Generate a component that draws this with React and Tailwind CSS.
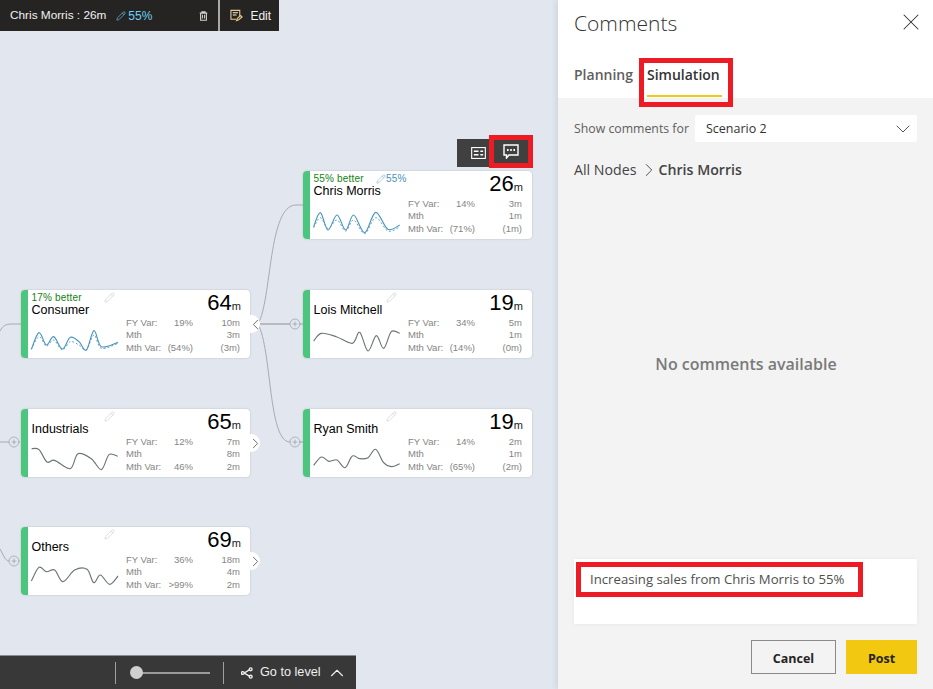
import React from 'react';
import { Pencil, X, ChevronDown, ChevronRight, ChevronLeft, ChevronUp, CirclePlus } from 'lucide-react';

// smooth line through points, coords are 3x card-local
const smoothPath = (pts) => {
  let d = `M${pts[0][0]} ${pts[0][1]}`;
  for (let i = 0; i < pts.length - 1; i++) {
    const p0 = pts[i - 1] || pts[i];
    const p1 = pts[i];
    const p2 = pts[i + 1];
    const p3 = pts[i + 2] || p2;
    const c1x = p1[0] + (p2[0] - p0[0]) / 6;
    const c1y = p1[1] + (p2[1] - p0[1]) / 6;
    const c2x = p2[0] - (p3[0] - p1[0]) / 6;
    const c2y = p2[1] - (p3[1] - p1[1]) / 6;
    d += ` C${c1x} ${c1y} ${c2x} ${c2y} ${p2[0]} ${p2[1]}`;
  }
  return d;
};

const nodes = [
  {
    name: 'Chris Morris', value: '26', left: 303, top: 171, better: '55% better', edited: '55%', blue: true,
    rows: [['FY Var:', '14%', '3m'], ['Mth', '', '1m'], ['Mth Var:', '(71%)', '(1m)']],
    line: [[32,167],[52,125],[75,177],[102,132],[128,177],[152,132],[185,185],[218,124],[255,175],[290,162]],
    dash: [[32,170],[52,140],[75,172],[102,147],[128,180],[152,147],[185,188],[218,140],[255,180],[290,168]],
  },
  {
    name: 'Consumer', value: '64', left: 21, top: 290, better: '17% better', handle: 'left', blue: true,
    rows: [['FY Var:', '19%', '10m'], ['Mth', '', '3m'], ['Mth Var:', '(54%)', '(3m)']],
    line: [[31,178],[54,128],[76,165],[98,140],[124,177],[148,142],[174,155],[196,180],[219,122],[241,170],[291,157]],
    dash: [[31,178],[54,140],[76,168],[98,150],[124,180],[148,155],[174,165],[196,180],[219,135],[241,175],[291,160]],
  },
  {
    name: 'Lois Mitchell', value: '19', left: 303, top: 290,
    rows: [['FY Var:', '34%', '5m'], ['Mth', '', '1m'], ['Mth Var:', '(14%)', '(0m)']],
    line: [[32,153],[55,130],[100,140],[148,160],[170,127],[195,183],[220,137],[242,175],[265,125],[290,130]],
  },
  {
    name: 'Industrials', value: '65', left: 21, top: 409, handle: 'right',
    rows: [['FY Var:', '12%', '7m'], ['Mth', '', '8m'], ['Mth Var:', '46%', '2m']],
    line: [[32,119],[54,122],[78,159],[101,154],[148,179],[171,134],[211,149],[241,182],[264,137],[290,142]],
  },
  {
    name: 'Ryan Smith', value: '19', left: 303, top: 409,
    rows: [['FY Var:', '14%', '2m'], ['Mth', '', '1m'], ['Mth Var:', '(65%)', '(2m)']],
    line: [[32,169],[55,144],[78,157],[102,153],[126,176],[148,141],[170,149],[195,146],[218,121],[242,161],[265,173],[290,164]],
  },
  {
    name: 'Others', value: '69', left: 21, top: 527, handle: 'right',
    rows: [['FY Var:', '36%', '18m'], ['Mth', '', '4m'], ['Mth Var:', '>99%', '2m']],
    line: [[31,162],[54,121],[76,134],[101,129],[126,164],[161,129],[198,127],[218,167],[238,144],[266,172],[291,147]],
  },
];

const plusMarks = [[14, 442], [14, 561], [295, 324], [295, 442]];

const Node = ({ node }) => (
  <div
    className="absolute flex h-[68px] w-[229px] rounded-[4px] bg-white shadow-[0_0_2px_rgba(0,0,0,0.2)] font-['Liberation_Sans',sans-serif]"
    style={{ left: node.left, top: node.top }}
  >
    <div className="w-[6.5px] shrink-0 rounded-l-[4px] bg-[#4cc57f]" />
    <div className="flex-1 min-w-0 pt-[3px]">
      <div className="flex justify-between pl-[4px] pr-[9px]">
        <div>
          <div className="flex h-[10px] items-center whitespace-nowrap text-[10px] leading-[10px] tracking-[0.2px] text-[#128212]">
            {node.better}
            {node.edited && (
              <span className="ml-[12px] flex items-center text-[#4a90b8]">
                <Pencil size={10} strokeWidth={1} />{node.edited}
              </span>
            )}
          </div>
          <div className="text-[12.5px] leading-[14px] text-black">{node.name}</div>
        </div>
        <div className="-mt-[3px] flex items-baseline whitespace-nowrap text-[22px] leading-[26px] text-black">
          {node.value}<span className="text-[11px] leading-none text-[#222]">m</span>
        </div>
      </div>
      <div className="ml-[98.5px] grid grid-cols-[36px_31px_47px] text-[9.5px] leading-[12.4px] text-[#858585]">
        {node.rows.map((row) => (
          <React.Fragment key={row[0]}>
            <span className="whitespace-nowrap">{row[0]}</span>
            <span className="whitespace-nowrap text-right">{row[1]}</span>
            <span className="text-right">{row[2]}</span>
          </React.Fragment>
        ))}
      </div>
    </div>
    <svg viewBox="0 0 690 204" className="absolute inset-0 h-[68px] w-[230px] pointer-events-none" fill="none">
      <path d={smoothPath(node.line)} stroke={node.blue ? '#4a94bd' : '#6b7478'} strokeWidth="3.4" />
      {node.dash && <path d={smoothPath(node.dash)} stroke="#4a94bd" strokeWidth="2.6" strokeDasharray="6 6" />}
    </svg>
    {!node.edited && (
      <Pencil size={11} strokeWidth={1.2} className="absolute left-[83px] top-[2px] text-[#c4c4c4]" />
    )}
    {node.handle && (
      <div className="absolute left-[229px] top-[25px] flex h-[18px] w-[10px] items-center justify-center rounded-r-full bg-white">
        {node.handle === 'left'
          ? <ChevronLeft size={17} strokeWidth={1.1} className="shrink-0 text-[#444]" />
          : <ChevronRight size={17} strokeWidth={1.1} className="shrink-0 text-[#444]" />}
      </div>
    )}
  </div>
);

const Canvas = () => (
  <div className="relative h-full w-[558px] shrink-0 overflow-hidden">
    {/* connectors */}
    <svg className="absolute inset-0 h-[689px] w-[558px]" fill="none" stroke="#a9abaf" strokeWidth="1">
      <path d="M0 331 C3 326 5 324 12 324 L21 324" />
      <path d="M0 442 L9 442" />
      <path d="M0 549 C3 554 5 561 9 561" />
      <path d="M260 324 L290 324" strokeWidth="1.5" />
      <path d="M258 324 C272 300 268 205 296 205 L303 205" />
      <path d="M258 324 C272 350 268 442 290 442" />
      <path d="M300 324 L303 324 M300 442 L303 442" />
    </svg>
    {plusMarks.map(([x, y]) => (
      <CirclePlus key={`${x}-${y}`} size={12} strokeWidth={1.2} className="absolute text-[#8f9296]" style={{ left: x - 6, top: y - 6 }} />
    ))}
    {nodes.map((node) => <Node key={node.name} node={node} />)}

    {/* selected node bar */}
    <div className="absolute left-0 top-0 flex h-[31px] w-[279px] items-center bg-[#252423] font-['Liberation_Sans',sans-serif] text-[12px] text-[#f2f2f2]">
      <span className="ml-[10px] whitespace-nowrap text-[11.8px]">Chris Morris : 26m</span>
      <span className="ml-[10px] flex items-center gap-[2px] text-[#6fd0f5]">
        <Pencil size={10} strokeWidth={1.5} />55%
      </span>
      <svg viewBox="0 0 10 12" className="ml-[47px] h-[10px] w-[9px]" fill="none" stroke="#cfcfcf" strokeWidth="1.3">
        <path d="M0.5 2.5 H9.5 M3 2.5 V1 H7 V2.5 M1.5 2.5 V11 H8.5 V2.5 M3.7 4.5 V9 M6.3 4.5 V9" />
      </svg>
      <div className="ml-[10px] h-[31px] w-[2px] bg-[#a8a8a8]" />
      <svg viewBox="0 0 14 14" className="ml-[10px] h-[13px] w-[13px]" fill="none" stroke="#e6c98a" strokeWidth="1.2">
        <path d="M10.5 8 V1.5 H1 V11 H6.5" />
        <path d="M3 4 H8.5 M3 6.5 H7" stroke="#f2f2f2" />
        <path d="M7 12.5 L8 10 L11.5 7 L13 8.5 L9.5 11.5 Z" />
      </svg>
      <span className="ml-[7px]">Edit</span>
    </div>

    {/* visual toolbar */}
    <div className="absolute left-[457px] top-[139px] flex h-[28px] w-[72px] items-center bg-[#404040]">
      <div className="flex w-[33px] justify-center">
        <svg viewBox="0 0 16 13" className="ml-[10px] h-[12px] w-[15px]" fill="none" stroke="#ffffff" strokeWidth="1.2">
          <rect x="0.6" y="0.6" width="14.8" height="11.8" />
          <path d="M3 4.5 H8 M3 8.5 H8 M10 4.5 H13 M10 8.5 H13" strokeWidth="1.6" />
        </svg>
      </div>
    </div>
    <div className="absolute left-[489px] top-[135px] flex h-[33px] w-[44px] items-center justify-center border-[5px] border-[#ed1c24] bg-[#404040]">
      <svg viewBox="0 0 16 15" className="h-[15px] w-[16px]" fill="none">
        <path d="M1 1 H15 V11 H6 L3.5 14 V11 H1 Z" stroke="#ffffff" strokeWidth="1.4" />
        <path d="M4 6 H5.6 M7.2 6 H8.8 M10.4 6 H12" stroke="#ffffff" strokeWidth="1.8" />
      </svg>
    </div>

    {/* bottom bar */}
    <div className="absolute bottom-0 left-0 flex h-[34px] w-[356px] items-center border-t border-t-[#8c8c8c] bg-[#383838] font-['Liberation_Sans',sans-serif] text-[12.7px] text-[#f0f0f0]">
      <div className="ml-[115px] h-[22px] w-px bg-[#a0a0a0]" />
      <div className="relative ml-[14px] h-[13px] w-[80px]">
        <div className="absolute left-[2px] right-0 top-[5.5px] h-[2px] bg-[#9a9a9a]" />
        <div className="absolute left-0 top-0 h-[13px] w-[13px] rounded-full bg-[#cfcfcf]" />
      </div>
      <div className="ml-[13px] h-[22px] w-px bg-[#a0a0a0]" />
      <svg viewBox="0 0 13 12" className="ml-[17px] h-[12px] w-[12px]" fill="none" stroke="#f0f0f0" strokeWidth="1.5">
        <circle cx="2" cy="6" r="1.5" />
        <circle cx="10.5" cy="2" r="1.5" />
        <circle cx="10.5" cy="10" r="1.5" />
        <path d="M3.5 6 L9 2.7 M3.5 6 L9 9.3" />
      </svg>
      <span className="ml-[7px] whitespace-nowrap pt-px">Go to level</span>
      <ChevronUp size={22} strokeWidth={1.2} className="ml-[5px]" />
    </div>
  </div>
);

const CommentsPanel = () => (
  <div className="flex h-full w-[375px] shrink-0 flex-col bg-[#f3f3f3] font-['Open_Sans',sans-serif] shadow-[-2px_0_6px_rgba(0,0,0,0.08)]">
    <div className="h-[98px] shrink-0 bg-white">
      <div className="flex h-[48px] items-center justify-between pl-[16px] pr-[8px]">
        <h1 className="text-[21px] font-light text-[#333]">Comments</h1>
        <X size={28} strokeWidth={0.9} className="-mt-[4px] text-[#333]" />
      </div>
      <div className="relative flex h-[50px] pl-[16px] text-[14px] font-semibold">
        <span className="mt-[17px] h-[20px] leading-[20px] text-[#605e5c]">Planning</span>
        <span className="ml-[14px] mt-[17px] h-[20px] leading-[20px] text-[#333]">Simulation</span>
        <div className="absolute left-[89px] top-[47px] h-[2px] w-[75px] bg-[#f2c811]" />
        <div className="absolute left-[81px] top-[10px] h-[49px] w-[94px] border-[5px] border-[#ed1c24]" />
      </div>
    </div>
    <div className="flex flex-1 flex-col px-[16px] pt-[17px]">
      <div className="flex h-[27px] items-center">
        <span className="w-[121px] whitespace-nowrap pt-px text-[12.3px] text-[#605e5c]">Show comments for</span>
        <div className="flex h-[27px] flex-1 items-center justify-between rounded-[2px] bg-white pl-[11px] pr-[2px] text-[12.5px] text-[#333]">
          <span className="pt-px">Scenario 2</span>
          <ChevronDown size={24} strokeWidth={0.9} className="text-[#444]" />
        </div>
      </div>
      <div className="mt-[16px] flex h-[24px] items-center text-[14.2px] text-[#444]">
        All Nodes
        <ChevronRight size={22} strokeWidth={1} className="ml-[2px] -mr-[2px]" />
        <span className="font-semibold text-[#444]">Chris Morris</span>
      </div>
      <div className="flex flex-1 items-center justify-center text-[16px] font-semibold text-[#7a7a7a]">
        <span className="mb-[13px] ml-[1px]">No comments available</span>
      </div>
      <div className="relative h-[65px] w-[343px] bg-white pl-[16px] pt-[11px] text-[13.2px] leading-[18px] text-[#505050] shadow-[0_0_4px_rgba(0,0,0,0.05)]">
        Increasing sales from Chris Morris to 55%
        <div className="absolute left-[2px] top-[3px] h-[35px] w-[287px] border-[5px] border-[#ed1c24]" />
      </div>
      <div className="mb-[15px] mt-[16px] flex h-[34px] justify-end gap-[10px] text-[12.5px] font-bold text-[#252423]">
        <button className="h-[34px] w-[85px] border border-[#8a8a8a] bg-[#f3f3f3] pt-[4px]">Cancel</button>
        <button className="h-[34px] w-[71px] bg-[#f2c811] pt-[4px]">Post</button>
      </div>
    </div>
  </div>
);

export default function App() {
  return (
    <div className="flex h-[689px] w-[933px] overflow-hidden bg-[#e1e6ef]">
      <Canvas />
      <CommentsPanel />
    </div>
  );
}
